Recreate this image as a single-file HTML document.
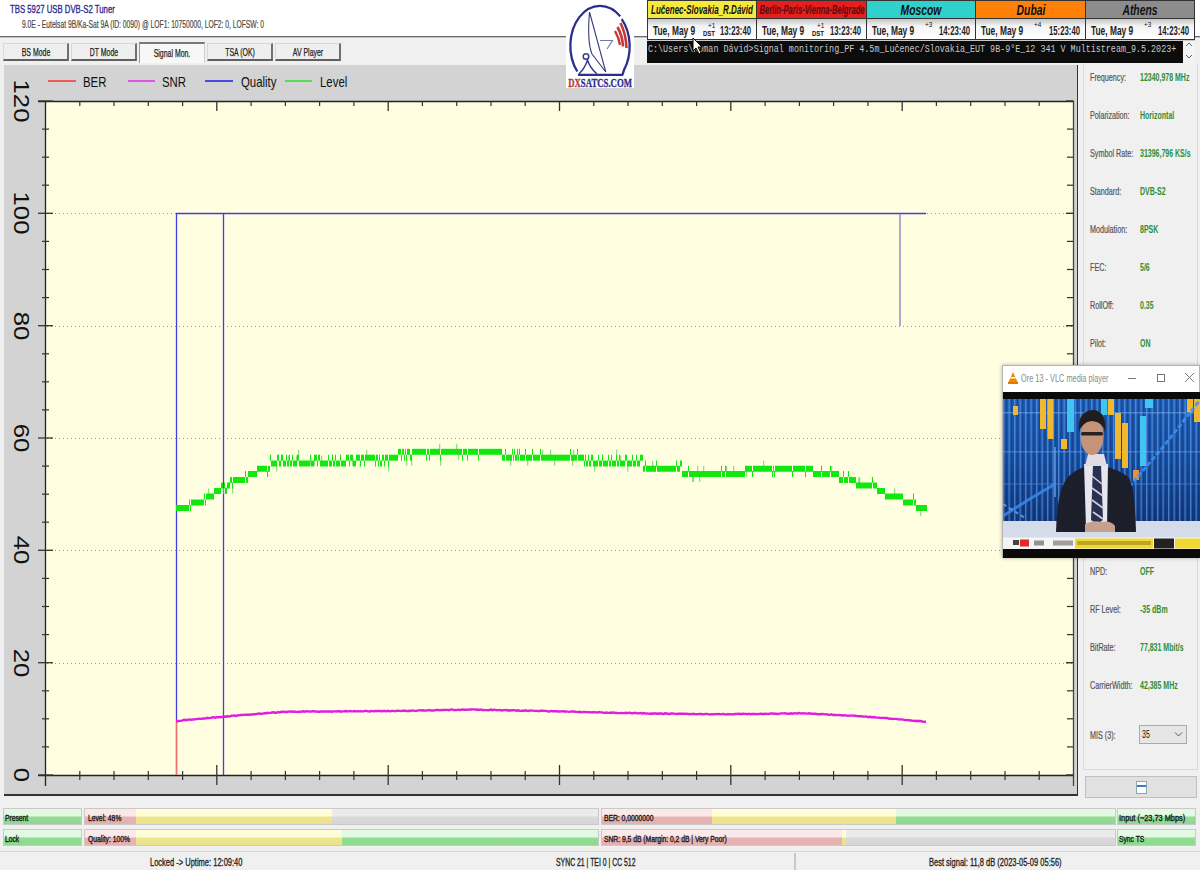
<!DOCTYPE html>
<html><head><meta charset="utf-8">
<style>
*{margin:0;padding:0;box-sizing:border-box}
html,body{width:1200px;height:870px;overflow:hidden;background:#f0f0f0;font-family:"Liberation Sans",sans-serif}
.a{position:absolute}
.t{position:absolute;white-space:nowrap;transform-origin:0 50%;line-height:1}
#top{left:0;top:0;width:1200px;height:36px;background:#fff}
#sep{left:0;top:36px;width:1200px;height:2px;background:linear-gradient(#6a6a6a 0,#6a6a6a 50%,#c4c4c4 50%)}
.tab{position:absolute;top:43px;height:18px;background:#efefef;border-top:1px solid #d8d8d8;border-left:1px solid #d8d8d8;border-bottom:2px solid #606060;border-right:2px solid #707070}
.tab span{position:absolute;left:50%;top:8px;font-size:10.5px;color:#222;-webkit-text-stroke:.25px #222;white-space:nowrap;transform:translate(-50%,-50%) scaleX(.66)}
#panel{left:4px;top:65px;width:1074px;height:731px;background:#d3d3d3;border-right:1px solid #333;border-bottom:2px solid #333}
#plot{left:46px;top:102px;width:1027px;height:673px;background:#fffee1}
.ylab{position:absolute;font-size:22px;color:#111;white-space:nowrap;line-height:1;transform-origin:50% 50%}
.leg{position:absolute;top:80.5px;font-size:15px;color:#111;transform-origin:0 50%;line-height:1}
.rl{position:absolute;left:1090px;font-size:10px;color:#555;-webkit-text-stroke:.2px #555;transform:translateY(-50%) scaleX(.72);transform-origin:0 50%;white-space:nowrap;line-height:1}
.rv{position:absolute;left:1140px;font-size:10px;color:#2c8e38;font-weight:bold;transform:translateY(-50%) scaleX(.70);transform-origin:0 50%;white-space:nowrap;line-height:1}
.ind{position:absolute;width:79px;height:17px;border:1px solid #c9c9c9;background:linear-gradient(#e4f9e4 0,#e4f9e4 48%,#94dc94 52%,#8fd98f 100%)}
.ind span,.bar span{position:absolute;left:3px;top:9.3px;font-size:8.9px;color:#1a1a1a;-webkit-text-stroke:.35px #1a1a1a;transform:translateY(-50%) scaleX(.76);transform-origin:0 50%;white-space:nowrap;line-height:1}
.bar{position:absolute;height:17px;border:1px solid #c9c9c9;background:#e2e2e2;overflow:hidden}
.bar i{position:absolute;top:0;bottom:0;display:block}
.pk{background:linear-gradient(#fbe9e9 0,#fbe9e9 48%,#e7b3b3 52%,#e6b0b0 100%)}
.yl{background:linear-gradient(#fffcd8 0,#fffcd8 48%,#ede590 52%,#ebe38a 100%)}
.gr{background:linear-gradient(#e4f9e4 0,#e4f9e4 48%,#94dc94 52%,#8fd98f 100%)}
.gy{background:linear-gradient(#ebebeb 0,#ebebeb 48%,#d9d9d9 52%,#d6d6d6 100%)}
.st{position:absolute;top:862px;font-size:10.5px;color:#222;-webkit-text-stroke:.3px #222;transform:translateY(-50%) scaleX(.715);transform-origin:0 50%;white-space:nowrap;line-height:1}
.clk{position:absolute;top:0;height:19px;border:1px solid #333;font-style:italic;font-weight:bold;font-size:14px;text-align:center;overflow:hidden}
.clk span{position:absolute;left:50%;top:9px;transform:translate(-50%,-50%) scaleX(.8);white-space:nowrap;line-height:1}
.tim{position:absolute;top:19px;height:21px;background:#fff;border:1px solid #333;border-top:none;overflow:hidden}
.tim span{position:absolute;top:11.5px;font-size:12.5px;font-weight:bold;color:#222;transform:translateY(-50%) scaleX(.62);transform-origin:0 50%;white-space:nowrap;line-height:1}
.tim b{position:absolute;font-weight:normal;font-size:8px;color:#111;transform:scaleX(.8);transform-origin:0 0;line-height:1}
</style></head><body>
<div id="top" class="a"></div>
<div class="t" style="left:10px;top:9.5px;font-size:11.5px;color:#2b2b8e;-webkit-text-stroke:.35px #2b2b8e;transform:translateY(-50%) scaleX(.675)">TBS 5927 USB DVB-S2 Tuner</div>
<div class="t" style="left:22px;top:24.5px;font-size:10px;color:#4a4a4a;-webkit-text-stroke:.2px #4a4a4a;transform:translateY(-50%) scaleX(.672)">9.0E - Eutelsat 9B/Ka-Sat 9A (ID: 0090) @ LOF1: 10750000, LOF2: 0, LOFSW: 0</div>
<div id="sep" class="a"></div>

<div class="tab" style="left:3px;width:66px"><span>BS Mode</span></div>
<div class="tab" style="left:71px;width:66px"><span>DT Mode</span></div>
<div class="tab" style="left:139px;width:66px;top:42px;background:#f7f7f7;border-top:2px solid #777;border-left:1px solid #999;border-bottom:none;border-right:1px solid #ccc;height:21px"><span style="top:9px">Signal Mon.</span></div>
<div class="tab" style="left:207px;width:66px"><span>TSA (OK)</span></div>
<div class="tab" style="left:275px;width:66px"><span>AV Player</span></div>

<div id="panel" class="a"></div>
<div id="plot" class="a"></div>

<!-- legend -->
<svg class="a" style="left:0;top:0" width="1200" height="870">
<line x1="48" y1="81" x2="76" y2="81" stroke="#ee5a5a" stroke-width="2"/>
<line x1="128" y1="81" x2="155" y2="81" stroke="#e055e0" stroke-width="2"/>
<line x1="205" y1="81" x2="233" y2="81" stroke="#4a4ae0" stroke-width="2"/>
<line x1="285" y1="81" x2="312" y2="81" stroke="#55dd55" stroke-width="2"/>
<line x1="47" y1="663.5" x2="1073" y2="663.5" stroke="#9a9a9a" stroke-width="1" stroke-dasharray="1 3"/>
<line x1="47" y1="550.5" x2="1073" y2="550.5" stroke="#9a9a9a" stroke-width="1" stroke-dasharray="1 3"/>
<line x1="47" y1="438.5" x2="1073" y2="438.5" stroke="#9a9a9a" stroke-width="1" stroke-dasharray="1 3"/>
<line x1="47" y1="326.5" x2="1073" y2="326.5" stroke="#9a9a9a" stroke-width="1" stroke-dasharray="1 3"/>
<line x1="47" y1="213.5" x2="1073" y2="213.5" stroke="#9a9a9a" stroke-width="1" stroke-dasharray="1 3"/>
<line x1="45.5" y1="101" x2="45.5" y2="786" stroke="#222" stroke-width="1.3"/>
<line x1="38" y1="101.5" x2="1073.5" y2="101.5" stroke="#222" stroke-width="1.3"/>
<line x1="38" y1="775.5" x2="1073.5" y2="775.5" stroke="#222" stroke-width="1.3"/>
<line x1="1073.5" y1="101" x2="1073.5" y2="786" stroke="#444" stroke-width="1.3"/>
<line x1="38" y1="775.0" x2="53" y2="775.0" stroke="#333" stroke-width="1.3"/>
<line x1="1066" y1="775.0" x2="1073.5" y2="775.0" stroke="#333" stroke-width="1.4"/>
<line x1="42" y1="746.9" x2="49" y2="746.9" stroke="#333" stroke-width="1.2"/>
<line x1="1067" y1="746.9" x2="1073.5" y2="746.9" stroke="#333" stroke-width="1.2"/>
<line x1="42" y1="718.8" x2="49" y2="718.8" stroke="#333" stroke-width="1.2"/>
<line x1="1067" y1="718.8" x2="1073.5" y2="718.8" stroke="#333" stroke-width="1.2"/>
<line x1="42" y1="690.8" x2="49" y2="690.8" stroke="#333" stroke-width="1.2"/>
<line x1="1067" y1="690.8" x2="1073.5" y2="690.8" stroke="#333" stroke-width="1.2"/>
<line x1="38" y1="662.7" x2="53" y2="662.7" stroke="#333" stroke-width="1.3"/>
<line x1="1066" y1="662.7" x2="1073.5" y2="662.7" stroke="#333" stroke-width="1.4"/>
<line x1="42" y1="634.6" x2="49" y2="634.6" stroke="#333" stroke-width="1.2"/>
<line x1="1067" y1="634.6" x2="1073.5" y2="634.6" stroke="#333" stroke-width="1.2"/>
<line x1="42" y1="606.5" x2="49" y2="606.5" stroke="#333" stroke-width="1.2"/>
<line x1="1067" y1="606.5" x2="1073.5" y2="606.5" stroke="#333" stroke-width="1.2"/>
<line x1="42" y1="578.4" x2="49" y2="578.4" stroke="#333" stroke-width="1.2"/>
<line x1="1067" y1="578.4" x2="1073.5" y2="578.4" stroke="#333" stroke-width="1.2"/>
<line x1="38" y1="550.3" x2="53" y2="550.3" stroke="#333" stroke-width="1.3"/>
<line x1="1066" y1="550.3" x2="1073.5" y2="550.3" stroke="#333" stroke-width="1.4"/>
<line x1="42" y1="522.2" x2="49" y2="522.2" stroke="#333" stroke-width="1.2"/>
<line x1="1067" y1="522.2" x2="1073.5" y2="522.2" stroke="#333" stroke-width="1.2"/>
<line x1="42" y1="494.2" x2="49" y2="494.2" stroke="#333" stroke-width="1.2"/>
<line x1="1067" y1="494.2" x2="1073.5" y2="494.2" stroke="#333" stroke-width="1.2"/>
<line x1="42" y1="466.1" x2="49" y2="466.1" stroke="#333" stroke-width="1.2"/>
<line x1="1067" y1="466.1" x2="1073.5" y2="466.1" stroke="#333" stroke-width="1.2"/>
<line x1="38" y1="438.0" x2="53" y2="438.0" stroke="#333" stroke-width="1.3"/>
<line x1="1066" y1="438.0" x2="1073.5" y2="438.0" stroke="#333" stroke-width="1.4"/>
<line x1="42" y1="409.9" x2="49" y2="409.9" stroke="#333" stroke-width="1.2"/>
<line x1="1067" y1="409.9" x2="1073.5" y2="409.9" stroke="#333" stroke-width="1.2"/>
<line x1="42" y1="381.8" x2="49" y2="381.8" stroke="#333" stroke-width="1.2"/>
<line x1="1067" y1="381.8" x2="1073.5" y2="381.8" stroke="#333" stroke-width="1.2"/>
<line x1="42" y1="353.8" x2="49" y2="353.8" stroke="#333" stroke-width="1.2"/>
<line x1="1067" y1="353.8" x2="1073.5" y2="353.8" stroke="#333" stroke-width="1.2"/>
<line x1="38" y1="325.7" x2="53" y2="325.7" stroke="#333" stroke-width="1.3"/>
<line x1="1066" y1="325.7" x2="1073.5" y2="325.7" stroke="#333" stroke-width="1.4"/>
<line x1="42" y1="297.6" x2="49" y2="297.6" stroke="#333" stroke-width="1.2"/>
<line x1="1067" y1="297.6" x2="1073.5" y2="297.6" stroke="#333" stroke-width="1.2"/>
<line x1="42" y1="269.5" x2="49" y2="269.5" stroke="#333" stroke-width="1.2"/>
<line x1="1067" y1="269.5" x2="1073.5" y2="269.5" stroke="#333" stroke-width="1.2"/>
<line x1="42" y1="241.4" x2="49" y2="241.4" stroke="#333" stroke-width="1.2"/>
<line x1="1067" y1="241.4" x2="1073.5" y2="241.4" stroke="#333" stroke-width="1.2"/>
<line x1="38" y1="213.3" x2="53" y2="213.3" stroke="#333" stroke-width="1.3"/>
<line x1="1066" y1="213.3" x2="1073.5" y2="213.3" stroke="#333" stroke-width="1.4"/>
<line x1="42" y1="185.2" x2="49" y2="185.2" stroke="#333" stroke-width="1.2"/>
<line x1="1067" y1="185.2" x2="1073.5" y2="185.2" stroke="#333" stroke-width="1.2"/>
<line x1="42" y1="157.2" x2="49" y2="157.2" stroke="#333" stroke-width="1.2"/>
<line x1="1067" y1="157.2" x2="1073.5" y2="157.2" stroke="#333" stroke-width="1.2"/>
<line x1="42" y1="129.1" x2="49" y2="129.1" stroke="#333" stroke-width="1.2"/>
<line x1="1067" y1="129.1" x2="1073.5" y2="129.1" stroke="#333" stroke-width="1.2"/>
<line x1="38" y1="101.0" x2="53" y2="101.0" stroke="#333" stroke-width="1.3"/>
<line x1="1066" y1="101.0" x2="1073.5" y2="101.0" stroke="#333" stroke-width="1.4"/>
<line x1="79.8" y1="101" x2="79.8" y2="106" stroke="#333" stroke-width="1.2"/>
<line x1="79.8" y1="771" x2="79.8" y2="780" stroke="#333" stroke-width="1.2"/>
<line x1="114.0" y1="101" x2="114.0" y2="106" stroke="#333" stroke-width="1.2"/>
<line x1="114.0" y1="771" x2="114.0" y2="780" stroke="#333" stroke-width="1.2"/>
<line x1="148.3" y1="101" x2="148.3" y2="106" stroke="#333" stroke-width="1.2"/>
<line x1="148.3" y1="771" x2="148.3" y2="780" stroke="#333" stroke-width="1.2"/>
<line x1="182.6" y1="101" x2="182.6" y2="106" stroke="#333" stroke-width="1.2"/>
<line x1="182.6" y1="771" x2="182.6" y2="780" stroke="#333" stroke-width="1.2"/>
<line x1="216.8" y1="101" x2="216.8" y2="111" stroke="#333" stroke-width="1.3"/>
<line x1="216.8" y1="765" x2="216.8" y2="785" stroke="#333" stroke-width="1.3"/>
<line x1="251.1" y1="101" x2="251.1" y2="106" stroke="#333" stroke-width="1.2"/>
<line x1="251.1" y1="771" x2="251.1" y2="780" stroke="#333" stroke-width="1.2"/>
<line x1="285.4" y1="101" x2="285.4" y2="106" stroke="#333" stroke-width="1.2"/>
<line x1="285.4" y1="771" x2="285.4" y2="780" stroke="#333" stroke-width="1.2"/>
<line x1="319.6" y1="101" x2="319.6" y2="106" stroke="#333" stroke-width="1.2"/>
<line x1="319.6" y1="771" x2="319.6" y2="780" stroke="#333" stroke-width="1.2"/>
<line x1="353.9" y1="101" x2="353.9" y2="106" stroke="#333" stroke-width="1.2"/>
<line x1="353.9" y1="771" x2="353.9" y2="780" stroke="#333" stroke-width="1.2"/>
<line x1="388.2" y1="101" x2="388.2" y2="111" stroke="#333" stroke-width="1.3"/>
<line x1="388.2" y1="765" x2="388.2" y2="785" stroke="#333" stroke-width="1.3"/>
<line x1="422.4" y1="101" x2="422.4" y2="106" stroke="#333" stroke-width="1.2"/>
<line x1="422.4" y1="771" x2="422.4" y2="780" stroke="#333" stroke-width="1.2"/>
<line x1="456.7" y1="101" x2="456.7" y2="106" stroke="#333" stroke-width="1.2"/>
<line x1="456.7" y1="771" x2="456.7" y2="780" stroke="#333" stroke-width="1.2"/>
<line x1="491.0" y1="101" x2="491.0" y2="106" stroke="#333" stroke-width="1.2"/>
<line x1="491.0" y1="771" x2="491.0" y2="780" stroke="#333" stroke-width="1.2"/>
<line x1="525.2" y1="101" x2="525.2" y2="106" stroke="#333" stroke-width="1.2"/>
<line x1="525.2" y1="771" x2="525.2" y2="780" stroke="#333" stroke-width="1.2"/>
<line x1="559.5" y1="101" x2="559.5" y2="111" stroke="#333" stroke-width="1.3"/>
<line x1="559.5" y1="765" x2="559.5" y2="785" stroke="#333" stroke-width="1.3"/>
<line x1="593.8" y1="101" x2="593.8" y2="106" stroke="#333" stroke-width="1.2"/>
<line x1="593.8" y1="771" x2="593.8" y2="780" stroke="#333" stroke-width="1.2"/>
<line x1="628.0" y1="101" x2="628.0" y2="106" stroke="#333" stroke-width="1.2"/>
<line x1="628.0" y1="771" x2="628.0" y2="780" stroke="#333" stroke-width="1.2"/>
<line x1="662.3" y1="101" x2="662.3" y2="106" stroke="#333" stroke-width="1.2"/>
<line x1="662.3" y1="771" x2="662.3" y2="780" stroke="#333" stroke-width="1.2"/>
<line x1="696.6" y1="101" x2="696.6" y2="106" stroke="#333" stroke-width="1.2"/>
<line x1="696.6" y1="771" x2="696.6" y2="780" stroke="#333" stroke-width="1.2"/>
<line x1="730.8" y1="101" x2="730.8" y2="111" stroke="#333" stroke-width="1.3"/>
<line x1="730.8" y1="765" x2="730.8" y2="785" stroke="#333" stroke-width="1.3"/>
<line x1="765.1" y1="101" x2="765.1" y2="106" stroke="#333" stroke-width="1.2"/>
<line x1="765.1" y1="771" x2="765.1" y2="780" stroke="#333" stroke-width="1.2"/>
<line x1="799.4" y1="101" x2="799.4" y2="106" stroke="#333" stroke-width="1.2"/>
<line x1="799.4" y1="771" x2="799.4" y2="780" stroke="#333" stroke-width="1.2"/>
<line x1="833.6" y1="101" x2="833.6" y2="106" stroke="#333" stroke-width="1.2"/>
<line x1="833.6" y1="771" x2="833.6" y2="780" stroke="#333" stroke-width="1.2"/>
<line x1="867.9" y1="101" x2="867.9" y2="106" stroke="#333" stroke-width="1.2"/>
<line x1="867.9" y1="771" x2="867.9" y2="780" stroke="#333" stroke-width="1.2"/>
<line x1="902.2" y1="101" x2="902.2" y2="111" stroke="#333" stroke-width="1.3"/>
<line x1="902.2" y1="765" x2="902.2" y2="785" stroke="#333" stroke-width="1.3"/>
<line x1="936.4" y1="101" x2="936.4" y2="106" stroke="#333" stroke-width="1.2"/>
<line x1="936.4" y1="771" x2="936.4" y2="780" stroke="#333" stroke-width="1.2"/>
<line x1="970.7" y1="101" x2="970.7" y2="106" stroke="#333" stroke-width="1.2"/>
<line x1="970.7" y1="771" x2="970.7" y2="780" stroke="#333" stroke-width="1.2"/>
<line x1="1005.0" y1="101" x2="1005.0" y2="106" stroke="#333" stroke-width="1.2"/>
<line x1="1005.0" y1="771" x2="1005.0" y2="780" stroke="#333" stroke-width="1.2"/>
<line x1="1039.2" y1="101" x2="1039.2" y2="106" stroke="#333" stroke-width="1.2"/>
<line x1="1039.2" y1="771" x2="1039.2" y2="780" stroke="#333" stroke-width="1.2"/>
<polyline points="176.5,775 176.5,213.5 223.5,213.5 223.5,775 223.5,213.5 926,213.5" fill="none" stroke="#4040e0" stroke-width="1.3"/>
<line x1="900" y1="214" x2="900" y2="326" stroke="#9090cc" stroke-width="1.5"/>
<line x1="176.5" y1="722" x2="176.5" y2="775" stroke="#f07070" stroke-width="1.3"/>
<polyline points="176.0,721.27 177.5,721.28 179.0,720.95 180.5,720.88 182.0,720.65 183.5,720.00 185.0,719.75 186.5,720.16 188.0,719.62 189.5,719.47 191.0,719.87 192.5,719.37 194.0,719.50 195.5,719.11 197.0,719.10 198.5,718.62 200.0,718.83 201.5,718.86 203.0,718.48 204.5,718.50 206.0,718.32 207.5,717.76 209.0,718.12 210.5,717.87 212.0,717.53 213.5,717.21 215.0,717.66 216.5,717.26 218.0,717.30 219.5,717.28 221.0,717.03 222.5,717.04 224.0,716.54 225.5,716.70 227.0,716.32 228.5,716.53 230.0,716.36 231.5,715.68 233.0,715.58 234.5,715.51 236.0,715.90 237.5,715.40 239.0,715.40 240.5,715.05 242.0,715.06 243.5,714.85 245.0,714.69 246.5,714.73 248.0,714.60 249.5,714.69 251.0,714.41 252.5,714.45 254.0,714.27 255.5,714.24 257.0,713.89 258.5,713.41 260.0,713.79 261.5,713.75 263.0,713.59 264.5,713.25 266.0,713.25 267.5,712.80 269.0,713.13 270.5,712.85 272.0,712.55 273.5,712.29 275.0,712.75 276.5,712.74 278.0,712.01 279.5,712.41 281.0,712.04 282.5,711.77 284.0,711.79 285.5,712.05 287.0,712.06 288.5,711.43 290.0,711.79 291.5,711.36 293.0,711.81 294.5,711.53 296.0,711.91 297.5,711.97 299.0,711.63 300.5,711.96 302.0,711.47 303.5,711.30 305.0,711.66 306.5,711.25 308.0,711.35 309.5,711.49 311.0,711.62 312.5,711.30 314.0,711.21 315.5,711.78 317.0,711.38 318.5,711.82 320.0,711.77 321.5,711.40 323.0,711.44 324.5,711.48 326.0,711.55 327.5,711.51 329.0,711.47 330.5,711.51 332.0,711.72 333.5,711.41 335.0,711.35 336.5,711.54 338.0,711.19 339.5,711.23 341.0,711.69 342.5,711.36 344.0,711.37 345.5,710.99 347.0,711.26 348.5,711.37 350.0,710.96 351.5,711.37 353.0,711.37 354.5,710.97 356.0,711.35 357.5,711.23 359.0,711.37 360.5,711.13 362.0,711.37 363.5,711.39 365.0,710.88 366.5,710.89 368.0,711.32 369.5,711.51 371.0,711.00 372.5,711.13 374.0,711.22 375.5,711.02 377.0,711.04 378.5,711.00 380.0,711.03 381.5,711.18 383.0,710.96 384.5,711.01 386.0,711.27 387.5,710.74 389.0,711.11 390.5,711.22 392.0,710.92 393.5,710.84 395.0,711.24 396.5,710.83 398.0,710.78 399.5,710.93 401.0,711.10 402.5,710.65 404.0,710.78 405.5,710.76 407.0,711.08 408.5,710.77 410.0,711.02 411.5,710.51 413.0,710.59 414.5,710.78 416.0,710.91 417.5,710.57 419.0,710.38 420.5,710.28 422.0,710.53 423.5,710.26 425.0,710.66 426.5,710.64 428.0,710.15 429.5,710.18 431.0,710.52 432.5,710.37 434.0,710.45 435.5,710.10 437.0,709.91 438.5,709.99 440.0,710.31 441.5,709.91 443.0,709.93 444.5,709.95 446.0,709.91 447.5,709.87 449.0,710.20 450.5,709.63 452.0,709.49 453.5,710.11 455.0,710.03 456.5,710.08 458.0,709.66 459.5,709.98 461.0,709.93 462.5,709.41 464.0,709.76 465.5,709.81 467.0,709.68 468.5,709.58 470.0,709.43 471.5,709.48 473.0,709.42 474.5,709.34 476.0,709.73 477.5,709.55 479.0,709.94 480.5,709.44 482.0,710.07 483.5,709.95 485.0,710.14 486.5,710.15 488.0,710.18 489.5,709.98 491.0,709.61 492.5,710.15 494.0,709.78 495.5,709.90 497.0,710.18 498.5,710.11 500.0,710.06 501.5,710.46 503.0,710.26 504.5,710.10 506.0,710.06 507.5,710.52 509.0,710.28 510.5,710.52 512.0,710.25 513.5,710.17 515.0,710.43 516.5,710.66 518.0,710.24 519.5,710.70 521.0,710.83 522.5,710.78 524.0,710.82 525.5,710.29 527.0,710.76 528.5,710.96 530.0,710.42 531.5,710.62 533.0,710.65 534.5,710.87 536.0,710.83 537.5,710.90 539.0,711.15 540.5,710.64 542.0,710.72 543.5,710.80 545.0,710.84 546.5,710.83 548.0,711.50 549.5,711.46 551.0,710.95 552.5,711.28 554.0,711.19 555.5,711.22 557.0,711.28 558.5,711.53 560.0,711.52 561.5,711.40 563.0,711.32 564.5,711.45 566.0,711.34 567.5,711.68 569.0,711.83 570.5,711.63 572.0,711.45 573.5,711.56 575.0,711.73 576.5,711.93 578.0,712.09 579.5,711.84 581.0,712.17 582.5,712.08 584.0,711.99 585.5,711.98 587.0,712.10 588.5,712.28 590.0,712.12 591.5,712.35 593.0,712.22 594.5,712.11 596.0,712.35 597.5,712.49 599.0,712.09 600.5,712.38 602.0,712.41 603.5,712.77 605.0,712.84 606.5,712.48 608.0,712.89 609.5,712.85 611.0,712.51 612.5,712.69 614.0,712.49 615.5,713.01 617.0,712.94 618.5,713.13 620.0,713.10 621.5,713.05 623.0,713.13 624.5,713.05 626.0,712.76 627.5,713.13 629.0,712.76 630.5,712.90 632.0,713.37 633.5,712.89 635.0,712.96 636.5,712.99 638.0,713.56 639.5,713.10 641.0,713.01 642.5,713.60 644.0,713.12 645.5,713.64 647.0,713.54 648.5,713.67 650.0,713.77 651.5,713.53 653.0,713.70 654.5,713.19 656.0,713.72 657.5,713.55 659.0,713.72 660.5,713.31 662.0,713.78 663.5,713.92 665.0,713.33 666.5,713.53 668.0,713.72 669.5,713.92 671.0,713.53 672.5,713.50 674.0,713.57 675.5,713.85 677.0,713.96 678.5,713.73 680.0,713.73 681.5,713.76 683.0,713.75 684.5,713.82 686.0,713.60 687.5,713.91 689.0,714.26 690.5,713.88 692.0,714.14 693.5,713.74 695.0,714.13 696.5,714.20 698.0,714.16 699.5,714.06 701.0,714.06 702.5,714.19 704.0,714.39 705.5,713.88 707.0,713.86 708.5,714.34 710.0,714.47 711.5,714.21 713.0,714.18 714.5,714.39 716.0,714.03 717.5,714.09 719.0,714.05 720.5,714.32 722.0,714.13 723.5,714.06 725.0,714.37 726.5,714.54 728.0,714.06 729.5,714.33 731.0,714.11 732.5,714.40 734.0,714.19 735.5,713.95 737.0,713.90 738.5,713.74 740.0,714.04 741.5,713.96 743.0,713.79 744.5,713.91 746.0,713.86 747.5,714.16 749.0,713.70 750.5,714.28 752.0,713.90 753.5,713.97 755.0,713.86 756.5,714.09 758.0,714.07 759.5,713.86 761.0,713.79 762.5,713.94 764.0,714.02 765.5,713.68 767.0,713.90 768.5,714.04 770.0,713.67 771.5,713.49 773.0,713.48 774.5,713.80 776.0,713.75 777.5,713.93 779.0,713.84 780.5,713.39 782.0,713.34 783.5,713.37 785.0,713.30 786.5,713.64 788.0,713.73 789.5,713.74 791.0,713.27 792.5,713.68 794.0,713.28 795.5,713.34 797.0,713.53 798.5,713.07 800.0,713.08 801.5,713.61 803.0,713.25 804.5,713.33 806.0,713.53 807.5,713.65 809.0,713.24 810.5,713.54 812.0,713.69 813.5,713.79 815.0,713.67 816.5,714.01 818.0,714.34 819.5,714.02 821.0,714.20 822.5,713.97 824.0,714.15 825.5,714.50 827.0,714.18 828.5,714.80 830.0,714.88 831.5,714.39 833.0,715.05 834.5,714.72 836.0,715.07 837.5,715.14 839.0,714.88 840.5,715.22 842.0,715.28 843.5,715.46 845.0,715.15 846.5,715.57 848.0,715.79 849.5,715.66 851.0,715.65 852.5,715.45 854.0,715.81 855.5,715.80 857.0,716.16 858.5,716.24 860.0,716.28 861.5,716.12 863.0,716.56 864.5,716.66 866.0,716.46 867.5,717.07 869.0,717.02 870.5,716.76 872.0,717.44 873.5,717.00 875.0,717.25 876.5,717.63 878.0,717.66 879.5,717.74 881.0,717.92 882.5,717.90 884.0,717.91 885.5,717.94 887.0,717.98 888.5,718.56 890.0,718.71 891.5,718.69 893.0,718.96 894.5,718.83 896.0,718.90 897.5,719.13 899.0,719.61 900.5,719.17 902.0,719.64 903.5,719.60 905.0,720.11 906.5,719.96 908.0,720.09 909.5,720.28 911.0,720.52 912.5,720.82 914.0,720.67 915.5,721.15 917.0,720.78 918.5,721.04 920.0,721.06 921.5,721.19 923.0,721.77 924.5,721.83 926.0,721.53" fill="none" stroke="#e01ee0" stroke-width="2.4"/>
<rect x="176" y="505" width="13" height="6" fill="#10e810"/>
<rect x="189" y="499.5" width="1" height="6" fill="#10e810"/>
<rect x="190" y="505" width="1" height="6" fill="#10e810"/>
<rect x="191" y="499.5" width="13" height="6" fill="#10e810"/>
<rect x="204" y="493.5" width="1" height="6" fill="#10e810"/>
<rect x="205" y="499.5" width="1" height="6" fill="#10e810"/>
<rect x="206" y="493.5" width="8" height="6" fill="#10e810"/>
<rect x="214" y="488" width="7" height="6" fill="#10e810"/>
<rect x="221" y="482.5" width="2" height="6" fill="#10e810"/>
<rect x="223" y="488" width="1" height="6" fill="#10e810"/>
<rect x="224" y="482.5" width="1" height="6" fill="#10e810"/>
<rect x="225" y="488" width="2" height="6" fill="#10e810"/>
<rect x="227" y="482.5" width="3" height="6" fill="#10e810"/>
<rect x="230" y="477" width="2" height="6" fill="#10e810"/>
<rect x="232" y="482.5" width="1" height="6" fill="#10e810"/>
<rect x="233" y="477" width="12" height="6" fill="#10e810"/>
<rect x="245" y="471" width="1" height="6" fill="#10e810"/>
<rect x="246" y="477" width="2" height="6" fill="#10e810"/>
<rect x="248" y="471" width="9" height="6" fill="#10e810"/>
<rect x="257" y="465.75" width="10" height="6" fill="#10e810"/>
<rect x="267" y="471" width="1" height="6" fill="#10e810"/>
<rect x="268" y="465.75" width="2" height="6" fill="#10e810"/>
<rect x="270" y="454.7" width="1" height="6" fill="#10e810"/>
<rect x="271" y="460.5" width="6" height="6" fill="#10e810"/>
<rect x="277" y="454.7" width="2" height="6" fill="#10e810"/>
<rect x="279" y="460.5" width="2" height="6" fill="#10e810"/>
<rect x="281" y="454.7" width="2" height="6" fill="#10e810"/>
<rect x="283" y="460.5" width="3" height="6" fill="#10e810"/>
<rect x="286" y="454.7" width="1" height="6" fill="#10e810"/>
<rect x="287" y="460.5" width="2" height="6" fill="#10e810"/>
<rect x="289" y="454.7" width="1" height="6" fill="#10e810"/>
<rect x="290" y="460.5" width="2" height="6" fill="#10e810"/>
<rect x="292" y="454.7" width="1" height="6" fill="#10e810"/>
<rect x="293" y="460.5" width="4" height="6" fill="#10e810"/>
<rect x="297" y="454.7" width="2" height="6" fill="#10e810"/>
<rect x="299" y="460.5" width="11" height="6" fill="#10e810"/>
<rect x="310" y="454.7" width="1" height="6" fill="#10e810"/>
<rect x="311" y="460.5" width="3" height="6" fill="#10e810"/>
<rect x="314" y="454.7" width="3" height="6" fill="#10e810"/>
<rect x="317" y="460.5" width="1" height="6" fill="#10e810"/>
<rect x="318" y="454.7" width="2" height="6" fill="#10e810"/>
<rect x="320" y="460.5" width="8" height="6" fill="#10e810"/>
<rect x="328" y="454.7" width="1" height="6" fill="#10e810"/>
<rect x="329" y="460.5" width="3" height="6" fill="#10e810"/>
<rect x="332" y="454.7" width="1" height="6" fill="#10e810"/>
<rect x="333" y="460.5" width="2" height="6" fill="#10e810"/>
<rect x="335" y="454.7" width="1" height="6" fill="#10e810"/>
<rect x="336" y="460.5" width="4" height="6" fill="#10e810"/>
<rect x="340" y="454.7" width="1" height="6" fill="#10e810"/>
<rect x="341" y="460.5" width="5" height="6" fill="#10e810"/>
<rect x="346" y="454.7" width="3" height="6" fill="#10e810"/>
<rect x="349" y="460.5" width="1" height="6" fill="#10e810"/>
<rect x="350" y="454.7" width="3" height="6" fill="#10e810"/>
<rect x="353" y="460.5" width="3" height="6" fill="#10e810"/>
<rect x="356" y="454.7" width="4" height="6" fill="#10e810"/>
<rect x="360" y="460.5" width="1" height="6" fill="#10e810"/>
<rect x="361" y="454.7" width="3" height="6" fill="#10e810"/>
<rect x="364" y="460.5" width="1" height="6" fill="#10e810"/>
<rect x="365" y="454.7" width="10" height="6" fill="#10e810"/>
<rect x="375" y="460.5" width="1" height="6" fill="#10e810"/>
<rect x="376" y="454.7" width="2" height="6" fill="#10e810"/>
<rect x="378" y="460.5" width="1" height="6" fill="#10e810"/>
<rect x="379" y="454.7" width="1" height="6" fill="#10e810"/>
<rect x="380" y="460.5" width="2" height="6" fill="#10e810"/>
<rect x="382" y="454.7" width="2" height="6" fill="#10e810"/>
<rect x="384" y="460.5" width="1" height="6" fill="#10e810"/>
<rect x="385" y="454.7" width="3" height="6" fill="#10e810"/>
<rect x="388" y="460.5" width="1" height="6" fill="#10e810"/>
<rect x="389" y="454.7" width="9" height="6" fill="#10e810"/>
<rect x="398" y="448.8" width="3" height="6" fill="#10e810"/>
<rect x="401" y="454.7" width="1" height="6" fill="#10e810"/>
<rect x="402" y="448.8" width="2" height="6" fill="#10e810"/>
<rect x="404" y="454.7" width="1" height="6" fill="#10e810"/>
<rect x="405" y="448.8" width="1" height="6" fill="#10e810"/>
<rect x="406" y="454.7" width="1" height="6" fill="#10e810"/>
<rect x="407" y="448.8" width="3" height="6" fill="#10e810"/>
<rect x="410" y="454.7" width="2" height="6" fill="#10e810"/>
<rect x="412" y="448.8" width="14" height="6" fill="#10e810"/>
<rect x="426" y="454.7" width="1" height="6" fill="#10e810"/>
<rect x="427" y="448.8" width="2" height="6" fill="#10e810"/>
<rect x="429" y="454.7" width="1" height="6" fill="#10e810"/>
<rect x="430" y="448.8" width="10" height="6" fill="#10e810"/>
<rect x="440" y="454.7" width="1" height="6" fill="#10e810"/>
<rect x="441" y="448.8" width="21" height="6" fill="#10e810"/>
<rect x="462" y="454.7" width="1" height="6" fill="#10e810"/>
<rect x="463" y="448.8" width="4" height="6" fill="#10e810"/>
<rect x="467" y="454.7" width="1" height="6" fill="#10e810"/>
<rect x="468" y="448.8" width="10" height="6" fill="#10e810"/>
<rect x="478" y="454.7" width="1" height="6" fill="#10e810"/>
<rect x="479" y="448.8" width="23" height="6" fill="#10e810"/>
<rect x="502" y="454.7" width="3" height="6" fill="#10e810"/>
<rect x="505" y="448.8" width="1" height="6" fill="#10e810"/>
<rect x="506" y="454.7" width="6" height="6" fill="#10e810"/>
<rect x="512" y="448.8" width="1" height="6" fill="#10e810"/>
<rect x="513" y="454.7" width="1" height="6" fill="#10e810"/>
<rect x="514" y="448.8" width="1" height="6" fill="#10e810"/>
<rect x="515" y="454.7" width="2" height="6" fill="#10e810"/>
<rect x="517" y="448.8" width="1" height="6" fill="#10e810"/>
<rect x="518" y="454.7" width="1" height="6" fill="#10e810"/>
<rect x="519" y="448.8" width="1" height="6" fill="#10e810"/>
<rect x="520" y="454.7" width="5" height="6" fill="#10e810"/>
<rect x="525" y="448.8" width="1" height="6" fill="#10e810"/>
<rect x="526" y="454.7" width="6" height="6" fill="#10e810"/>
<rect x="532" y="448.8" width="1" height="6" fill="#10e810"/>
<rect x="533" y="454.7" width="7" height="6" fill="#10e810"/>
<rect x="540" y="448.8" width="1" height="6" fill="#10e810"/>
<rect x="541" y="454.7" width="29" height="6" fill="#10e810"/>
<rect x="570" y="448.8" width="1" height="6" fill="#10e810"/>
<rect x="571" y="454.7" width="6" height="6" fill="#10e810"/>
<rect x="577" y="448.8" width="1" height="6" fill="#10e810"/>
<rect x="578" y="454.7" width="6" height="6" fill="#10e810"/>
<rect x="584" y="460.5" width="1" height="6" fill="#10e810"/>
<rect x="585" y="454.7" width="1" height="6" fill="#10e810"/>
<rect x="586" y="460.5" width="2" height="6" fill="#10e810"/>
<rect x="588" y="454.7" width="1" height="6" fill="#10e810"/>
<rect x="589" y="460.5" width="2" height="6" fill="#10e810"/>
<rect x="591" y="454.7" width="2" height="6" fill="#10e810"/>
<rect x="593" y="460.5" width="5" height="6" fill="#10e810"/>
<rect x="598" y="454.7" width="1" height="6" fill="#10e810"/>
<rect x="599" y="460.5" width="3" height="6" fill="#10e810"/>
<rect x="602" y="454.7" width="1" height="6" fill="#10e810"/>
<rect x="603" y="460.5" width="5" height="6" fill="#10e810"/>
<rect x="608" y="454.7" width="1" height="6" fill="#10e810"/>
<rect x="609" y="460.5" width="2" height="6" fill="#10e810"/>
<rect x="611" y="454.7" width="1" height="6" fill="#10e810"/>
<rect x="612" y="460.5" width="4" height="6" fill="#10e810"/>
<rect x="616" y="454.7" width="1" height="6" fill="#10e810"/>
<rect x="617" y="460.5" width="2" height="6" fill="#10e810"/>
<rect x="619" y="454.7" width="1" height="6" fill="#10e810"/>
<rect x="620" y="460.5" width="5" height="6" fill="#10e810"/>
<rect x="625" y="454.7" width="2" height="6" fill="#10e810"/>
<rect x="627" y="460.5" width="5" height="6" fill="#10e810"/>
<rect x="632" y="454.7" width="1" height="6" fill="#10e810"/>
<rect x="633" y="460.5" width="3" height="6" fill="#10e810"/>
<rect x="636" y="454.7" width="1" height="6" fill="#10e810"/>
<rect x="637" y="460.5" width="3" height="6" fill="#10e810"/>
<rect x="640" y="454.7" width="3" height="6" fill="#10e810"/>
<rect x="643" y="465.75" width="2" height="6" fill="#10e810"/>
<rect x="645" y="460.5" width="1" height="6" fill="#10e810"/>
<rect x="646" y="465.75" width="10" height="6" fill="#10e810"/>
<rect x="656" y="460.5" width="1" height="6" fill="#10e810"/>
<rect x="657" y="465.75" width="19" height="6" fill="#10e810"/>
<rect x="676" y="460.5" width="1" height="6" fill="#10e810"/>
<rect x="677" y="465.75" width="3" height="6" fill="#10e810"/>
<rect x="680" y="460.5" width="2" height="6" fill="#10e810"/>
<rect x="682" y="471" width="6" height="6" fill="#10e810"/>
<rect x="688" y="465.75" width="1" height="6" fill="#10e810"/>
<rect x="689" y="471" width="32" height="6" fill="#10e810"/>
<rect x="721" y="465.75" width="1" height="6" fill="#10e810"/>
<rect x="722" y="471" width="3" height="6" fill="#10e810"/>
<rect x="725" y="465.75" width="1" height="6" fill="#10e810"/>
<rect x="726" y="471" width="19" height="6" fill="#10e810"/>
<rect x="745" y="465.75" width="7" height="6" fill="#10e810"/>
<rect x="752" y="471" width="1" height="6" fill="#10e810"/>
<rect x="753" y="465.75" width="19" height="6" fill="#10e810"/>
<rect x="772" y="471" width="1" height="6" fill="#10e810"/>
<rect x="773" y="465.75" width="1" height="6" fill="#10e810"/>
<rect x="774" y="471" width="1" height="6" fill="#10e810"/>
<rect x="775" y="465.75" width="17" height="6" fill="#10e810"/>
<rect x="792" y="471" width="1" height="6" fill="#10e810"/>
<rect x="793" y="465.75" width="12" height="6" fill="#10e810"/>
<rect x="805" y="471" width="1" height="6" fill="#10e810"/>
<rect x="806" y="465.75" width="7" height="6" fill="#10e810"/>
<rect x="813" y="471" width="8" height="6" fill="#10e810"/>
<rect x="821" y="465.75" width="1" height="6" fill="#10e810"/>
<rect x="822" y="471" width="8" height="6" fill="#10e810"/>
<rect x="830" y="465.75" width="1" height="6" fill="#10e810"/>
<rect x="831" y="471" width="8" height="6" fill="#10e810"/>
<rect x="839" y="477" width="4" height="6" fill="#10e810"/>
<rect x="843" y="471" width="1" height="6" fill="#10e810"/>
<rect x="844" y="477" width="4" height="6" fill="#10e810"/>
<rect x="848" y="471" width="1" height="6" fill="#10e810"/>
<rect x="849" y="477" width="7" height="6" fill="#10e810"/>
<rect x="856" y="482.5" width="16" height="6" fill="#10e810"/>
<rect x="872" y="477" width="1" height="6" fill="#10e810"/>
<rect x="873" y="482.5" width="4" height="6" fill="#10e810"/>
<rect x="877" y="488" width="8" height="6" fill="#10e810"/>
<rect x="885" y="493.5" width="18" height="6" fill="#10e810"/>
<rect x="903" y="499.5" width="10" height="6" fill="#10e810"/>
<rect x="913" y="493.5" width="1" height="6" fill="#10e810"/>
<rect x="914" y="499.5" width="2" height="6" fill="#10e810"/>
<rect x="916" y="505" width="11" height="6" fill="#10e810"/>
<rect x="352.3" y="457.7" width="0.9" height="8" fill="#30d030" opacity=".8"/>
<rect x="652.3" y="460.75" width="0.9" height="8" fill="#30d030" opacity=".8"/>
<rect x="594.3" y="463.5" width="0.9" height="8" fill="#30d030" opacity=".8"/>
<rect x="550.3" y="449.7" width="0.9" height="8" fill="#30d030" opacity=".8"/>
<rect x="232.3" y="485.5" width="0.9" height="8" fill="#30d030" opacity=".8"/>
<rect x="894.3" y="488.5" width="0.9" height="8" fill="#30d030" opacity=".8"/>
<rect x="693.3" y="474" width="0.9" height="8" fill="#30d030" opacity=".8"/>
<rect x="298.3" y="449.7" width="0.9" height="8" fill="#30d030" opacity=".8"/>
<rect x="726.3" y="466" width="0.9" height="8" fill="#30d030" opacity=".8"/>
<rect x="572.3" y="457.7" width="0.9" height="8" fill="#30d030" opacity=".8"/>
<rect x="703.3" y="466" width="0.9" height="8" fill="#30d030" opacity=".8"/>
<rect x="456.3" y="443.8" width="0.9" height="8" fill="#30d030" opacity=".8"/>
<rect x="458.3" y="451.8" width="0.9" height="8" fill="#30d030" opacity=".8"/>
<rect x="411.3" y="457.7" width="0.9" height="8" fill="#30d030" opacity=".8"/>
<rect x="296.3" y="455.5" width="0.9" height="8" fill="#30d030" opacity=".8"/>
<rect x="288.3" y="455.5" width="0.9" height="8" fill="#30d030" opacity=".8"/>
<rect x="620.3" y="455.5" width="0.9" height="8" fill="#30d030" opacity=".8"/>
<rect x="554.3" y="457.7" width="0.9" height="8" fill="#30d030" opacity=".8"/>
<rect x="366.3" y="449.7" width="0.9" height="8" fill="#30d030" opacity=".8"/>
<rect x="699.3" y="474" width="0.9" height="8" fill="#30d030" opacity=".8"/>
<rect x="858.3" y="477.5" width="0.9" height="8" fill="#30d030" opacity=".8"/>
<rect x="440.3" y="457.7" width="0.9" height="8" fill="#30d030" opacity=".8"/>
<rect x="527.3" y="457.7" width="0.9" height="8" fill="#30d030" opacity=".8"/>
<rect x="276.3" y="463.5" width="0.9" height="8" fill="#30d030" opacity=".8"/>
<rect x="314.3" y="457.7" width="0.9" height="8" fill="#30d030" opacity=".8"/>
<rect x="406.3" y="457.7" width="0.9" height="8" fill="#30d030" opacity=".8"/>
<rect x="517.3" y="451.8" width="0.9" height="8" fill="#30d030" opacity=".8"/>
<rect x="510.3" y="457.7" width="0.9" height="8" fill="#30d030" opacity=".8"/>
<rect x="321.3" y="455.5" width="0.9" height="8" fill="#30d030" opacity=".8"/>
<rect x="859.3" y="477.5" width="0.9" height="8" fill="#30d030" opacity=".8"/>
<rect x="697.3" y="466" width="0.9" height="8" fill="#30d030" opacity=".8"/>
<rect x="627.3" y="463.5" width="0.9" height="8" fill="#30d030" opacity=".8"/>
<rect x="692.3" y="474" width="0.9" height="8" fill="#30d030" opacity=".8"/>
<rect x="763.3" y="460.75" width="0.9" height="8" fill="#30d030" opacity=".8"/>
<rect x="616.3" y="449.7" width="0.9" height="8" fill="#30d030" opacity=".8"/>
<rect x="733.3" y="466" width="0.9" height="8" fill="#30d030" opacity=".8"/>
<rect x="573.3" y="449.7" width="0.9" height="8" fill="#30d030" opacity=".8"/>
<rect x="208.3" y="488.5" width="0.9" height="8" fill="#30d030" opacity=".8"/>
<rect x="831.3" y="466" width="0.9" height="8" fill="#30d030" opacity=".8"/>
<rect x="310.3" y="457.7" width="0.9" height="8" fill="#30d030" opacity=".8"/>
<rect x="388.3" y="463.5" width="0.9" height="8" fill="#30d030" opacity=".8"/>
<rect x="920.3" y="508" width="0.9" height="8" fill="#30d030" opacity=".8"/>
<rect x="439.3" y="443.8" width="0.9" height="8" fill="#30d030" opacity=".8"/>
<rect x="746.3" y="468.75" width="0.9" height="8" fill="#30d030" opacity=".8"/>
<rect x="542.3" y="449.7" width="0.9" height="8" fill="#30d030" opacity=".8"/>
</svg>
<div class="leg" style="left:83px;transform:translateY(-50%) scaleX(.76)">BER</div>
<div class="leg" style="left:162px;transform:translateY(-50%) scaleX(.76)">SNR</div>
<div class="leg" style="left:241px;transform:translateY(-50%) scaleX(.76)">Quality</div>
<div class="leg" style="left:320px;transform:translateY(-50%) scaleX(.76)">Level</div>

<!-- y labels -->
<div class="ylab" style="left:21px;top:775.0px;transform:translate(-50%,-50%) rotate(90deg) scaleX(1.17)">0</div>
<div class="ylab" style="left:21px;top:662.7px;transform:translate(-50%,-50%) rotate(90deg) scaleX(1.17)">20</div>
<div class="ylab" style="left:21px;top:550.3px;transform:translate(-50%,-50%) rotate(90deg) scaleX(1.17)">40</div>
<div class="ylab" style="left:21px;top:438.0px;transform:translate(-50%,-50%) rotate(90deg) scaleX(1.17)">60</div>
<div class="ylab" style="left:21px;top:325.7px;transform:translate(-50%,-50%) rotate(90deg) scaleX(1.17)">80</div>
<div class="ylab" style="left:21px;top:213.3px;transform:translate(-50%,-50%) rotate(90deg) scaleX(1.17)">100</div>
<div class="ylab" style="left:21px;top:101.0px;transform:translate(-50%,-50%) rotate(90deg) scaleX(1.17)">120</div>

<!-- right panel -->
<div class="a" style="left:1083px;top:64px;width:1px;height:706px;background:#dadada"></div>
<div class="a" style="left:1083px;top:769px;width:115px;height:1px;background:#dadada"></div>
<div class="a" style="left:1197px;top:64px;width:1px;height:706px;background:#dadada"></div>
<div class="rl" style="top:78px">Frequency:</div><div class="rv" style="top:78px">12340,978 MHz</div>
<div class="rl" style="top:116px">Polarization:</div><div class="rv" style="top:116px">Horizontal</div>
<div class="rl" style="top:154px">Symbol Rate:</div><div class="rv" style="top:154px">31396,796 KS/s</div>
<div class="rl" style="top:192px">Standard:</div><div class="rv" style="top:192px">DVB-S2</div>
<div class="rl" style="top:230px">Modulation:</div><div class="rv" style="top:230px">8PSK</div>
<div class="rl" style="top:268px">FEC:</div><div class="rv" style="top:268px">5/6</div>
<div class="rl" style="top:306px">RollOff:</div><div class="rv" style="top:306px">0.35</div>
<div class="rl" style="top:344px">Pilot:</div><div class="rv" style="top:344px">ON</div>
<div class="rl" style="top:572px">NPD:</div><div class="rv" style="top:572px">OFF</div>
<div class="rl" style="top:610px">RF Level:</div><div class="rv" style="top:610px">-35 dBm</div>
<div class="rl" style="top:648px">BitRate:</div><div class="rv" style="top:648px">77,831 Mbit/s</div>
<div class="rl" style="top:686px">CarrierWidth:</div><div class="rv" style="top:686px">42,385 MHz</div>
<div class="rl" style="top:736px">MIS (3):</div>
<div class="a" style="left:1139px;top:725px;width:48px;height:19px;background:#e6e6e6;border:1px solid #aaa"></div>
<div class="t" style="left:1142px;top:735px;font-size:10px;color:#111;transform:translateY(-50%) scaleX(.7)">35</div>
<svg class="a" style="left:1174px;top:731px" width="9" height="7"><polyline points="1,1.5 4.5,5 8,1.5" fill="none" stroke="#555" stroke-width="1"/></svg>
<div class="a" style="left:1085px;top:776px;width:112px;height:22px;background:#e1e1e1;border:1px solid #c0c0c0"></div>
<div class="a" style="left:1136px;top:781px;width:11px;height:13px;background:#fff;border:1px solid #8aa;"></div>
<div class="a" style="left:1137px;top:785px;width:9px;height:2px;background:#3a7ad0"></div>

<!-- bottom bars -->
<div class="ind" style="left:3px;top:808px"><span style="left:1px">Present</span></div>
<div class="ind" style="left:3px;top:829px"><span style="left:1px">Lock</span></div>
<div class="bar" style="left:84px;top:808px;width:515px"><i class="gy" style="left:0;right:0"></i><i class="pk" style="left:0;width:51px"></i><i class="yl" style="left:51px;width:196px"></i><span>Level: 48%</span></div>
<div class="bar" style="left:84px;top:829px;width:515px"><i class="gr" style="left:0;right:0"></i><i class="pk" style="left:0;width:51px"></i><i class="yl" style="left:51px;width:206px"></i><span>Quality: 100%</span></div>
<div class="bar" style="left:601px;top:808px;width:515px"><i class="gr" style="left:0;right:0"></i><i class="pk" style="left:0;width:110px"></i><i class="yl" style="left:110px;width:184px"></i><span style="left:1.5px">BER: 0,0000000</span></div>
<div class="bar" style="left:601px;top:829px;width:515px"><i class="gy" style="left:0;right:0"></i><i class="pk" style="left:0;width:240px"></i><i class="yl" style="left:240px;width:4px"></i><span style="left:2px">SNR: 9,5 dB (Margin: 0,2 dB | Very Poor)</span></div>
<div class="ind" style="left:1117px;top:808px"><span style="left:1px;transform:translateY(-50%) scaleX(.83)">Input (~23,73 Mbps)</span></div>
<div class="ind" style="left:1117px;top:829px"><span style="left:1px">Sync TS</span></div>
<div class="a" style="left:0;top:851px;width:1200px;height:1px;background:#d6d6d6"></div>
<div class="a" style="left:794px;top:853px;width:2px;height:17px;background:#c8c8c8"></div>
<div class="st" style="left:150px">Locked -&gt; Uptime: 12:09:40</div>
<div class="st" style="left:556px;transform:translateY(-50%) scaleX(.655)">SYNC 21 | TEI 0 | CC 512</div>
<div class="st" style="left:929px">Best signal: 11,8 dB (2023-05-09 05:56)</div>

<!-- logo -->
<div class="a" style="left:566px;top:36px;width:68px;height:52px;background:#fff"></div>
<svg class="a" style="left:560px;top:0" width="80" height="92">
<path d="M17.3,71.5 A29.7,40 0 0 1 60.2,16.4" fill="none" stroke="#2e2e8e" stroke-width="2.3"/>
<path d="M61.7,19.1 A29.7,40 0 0 1 64,69.9 L62.5,75" fill="none" stroke="#2e2e8e" stroke-width="2.3"/>
<line x1="18" y1="74.8" x2="63" y2="74.8" stroke="#2e2e8e" stroke-width="2.2"/>
<path d="M60.5,23 Q66,34 66.5,48" fill="none" stroke="#c83838" stroke-width="2.6"/>
<path d="M57.5,27 Q62.5,36 63,46.5" fill="none" stroke="#c83838" stroke-width="2.6"/>
<path d="M55,31 Q59,38 60,45" fill="none" stroke="#c83838" stroke-width="2.4"/>
<path d="M29.5,12 L45.8,72 M29.5,12 Q27,42 32,54 L45.8,72" fill="none" stroke="#3a3a7a" stroke-width="1.1"/>
<path d="M40,40.5 L52.5,40.5 L47,49" fill="none" stroke="#6a7aaa" stroke-width="1.1"/>
<circle cx="26" cy="56.5" r="2.8" fill="none" stroke="#3a3a8a" stroke-width="1.5"/>
<path d="M19,74 Q25,68 27.5,60 Q30,68 37,74" fill="none" stroke="#3a3a8a" stroke-width="1.5"/>
<text x="8.2" y="86.8" font-family="Liberation Serif" font-weight="bold" font-size="12.8" stroke-width="0.35" textLength="63.8" lengthAdjust="spacingAndGlyphs"><tspan fill="#b03a3a" stroke="#b03a3a">DX</tspan><tspan fill="#2e2e8e" stroke="#2e2e8e">SATCS.COM</tspan></text>
</svg>

<!-- clocks -->
<div class="a" style="left:647px;top:0;width:548px;height:40px;background:#222"></div>
<div class="a" style="left:647px;top:40px;width:548px;height:1px;background:#c8c8c8"></div>
<div class="clk" style="left:647px;width:110px;background:#f5e93e;color:#111"><span style="font-size:12.5px;transform:translate(-50%,-50%) scaleX(.64)">Lučenec-Slovakia_R.Dávid</span></div>
<div class="clk" style="left:756px;width:111px;background:#e61e1e;color:#5a0a0a"><span style="font-size:12.5px;transform:translate(-50%,-50%) scaleX(.61)">Berlin-Paris-Vienna-Belgrade</span></div>
<div class="clk" style="left:866px;width:110px;background:#30d0cc;color:#111"><span style="font-size:14px;transform:translate(-50%,-50%) scaleX(.74)">Moscow</span></div>
<div class="clk" style="left:975px;width:111px;background:#ff8008;color:#111"><span style="font-size:14px;transform:translate(-50%,-50%) scaleX(.74)">Dubai</span></div>
<div class="clk" style="left:1085px;width:110px;background:#8c8c8c;color:#111"><span style="font-size:14px;transform:translate(-50%,-50%) scaleX(.74)">Athens</span></div>
<div class="tim" style="left:647px;width:110px;background:linear-gradient(#c4c4c4 0,#f4f4f4 35%,#fff 100%)"><span style="left:5px;transform:translateY(-50%) scaleX(.67)">Tue, May 9</span><b style="left:60px;top:3px">+1</b><b style="left:55px;top:11px;font-weight:bold;transform:scaleX(.75)">DST</b><span style="left:72px">13:23:40</span></div>
<div class="tim" style="left:756px;width:111px;background:linear-gradient(#c4c4c4 0,#f4f4f4 35%,#fff 100%)"><span style="left:5px;transform:translateY(-50%) scaleX(.67)">Tue, May 9</span><b style="left:60px;top:3px">+1</b><b style="left:55px;top:11px;font-weight:bold;transform:scaleX(.75)">DST</b><span style="left:73px">13:23:40</span></div>
<div class="tim" style="left:866px;width:110px;background:linear-gradient(#c4c4c4 0,#f4f4f4 35%,#fff 100%)"><span style="left:5px;transform:translateY(-50%) scaleX(.67)">Tue, May 9</span><b style="left:58px;top:2px">+3</b><span style="left:72px">14:23:40</span></div>
<div class="tim" style="left:975px;width:111px;background:linear-gradient(#c4c4c4 0,#f4f4f4 35%,#fff 100%)"><span style="left:5px;transform:translateY(-50%) scaleX(.67)">Tue, May 9</span><b style="left:58px;top:2px">+4</b><span style="left:73px">15:23:40</span></div>
<div class="tim" style="left:1085px;width:110px;background:linear-gradient(#c4c4c4 0,#f4f4f4 35%,#fff 100%)"><span style="left:5px;transform:translateY(-50%) scaleX(.67)">Tue, May 9</span><b style="left:58px;top:2px">+3</b><span style="left:72px">14:23:40</span></div>
<!-- cmd -->
<div class="a" style="left:647px;top:41px;width:548px;height:22px;background:#0c0c0c"></div>
<div class="t" style="left:648px;top:49px;font-family:'Liberation Mono',monospace;font-size:11.5px;color:#c8c8c8;transform:translateY(-50%) scaleX(.729)">C:\Users\Roman Dávid&gt;Signal monitoring_PF 4.5m_Lučenec/Slovakia_EUT 9B-9°E_12 341 V Multistream_9.5.2023+</div>
<div class="a" style="left:1183px;top:41px;width:12px;height:22px;background:#f4f4f4"></div>
<svg class="a" style="left:1184px;top:40px" width="10" height="22"><polyline points="2,6 5,3 8,6" fill="none" stroke="#666" stroke-width="1"/><polyline points="2,15 5,18 8,15" fill="none" stroke="#666" stroke-width="1"/></svg>
<!-- mouse cursor -->
<svg class="a" style="left:691.5px;top:37px" width="12" height="18"><path d="M1,1 L1,14 L4,11 L7,17 L9,16 L6,10 L10,10 Z" fill="#fff" stroke="#000" stroke-width="1"/></svg>

<!-- VLC -->
<div class="a" style="left:1002px;top:365px;width:198px;height:193px;background:#fff;border:1px solid #b4b4b4;box-shadow:0 0 4px rgba(0,0,0,.3)"></div>
<svg class="a" style="left:1007px;top:371px" width="12" height="14"><path d="M6,1 L11,12 L1,12 Z" fill="#f08a00"/><rect x="3.5" y="6" width="5" height="1.5" fill="#fff"/><rect x="1" y="11" width="10" height="2" fill="#e07800"/></svg>
<div class="t" style="left:1021px;top:379px;font-size:11.5px;color:#8a8a8a;transform:translateY(-50%) scaleX(.64)">Ore 13 - VLC media player</div>
<div class="a" style="left:1128px;top:378px;width:8px;height:1px;background:#777"></div>
<div class="a" style="left:1157px;top:374px;width:8px;height:8px;border:1px solid #777"></div>
<svg class="a" style="left:1184px;top:372px" width="11" height="11"><path d="M1,1 L10,10 M10,1 L1,10" stroke="#777" stroke-width="1"/></svg>
<svg class="a" style="left:1003px;top:392px" width="197" height="166">
<rect x="0" y="0" width="197" height="166" fill="#0a0a0a"/>
<defs><linearGradient id="vb" x1="0" y1="0" x2="0" y2="1"><stop offset="0" stop-color="#1c5ab4"/><stop offset="0.5" stop-color="#154ca0"/><stop offset="1" stop-color="#0f3478"/></linearGradient>
<pattern id="vs" width="5.5" height="10" patternUnits="userSpaceOnUse"><rect x="0" y="0" width="1.4" height="10" fill="#6aaaf0" opacity=".6"/><rect x="2.8" y="0" width="1" height="10" fill="#0e2e70" opacity=".5"/></pattern></defs>
<rect x="0" y="7" width="197" height="124" fill="url(#vb)"/>
<rect x="0" y="7" width="197" height="122" fill="url(#vs)"/>
<rect x="0" y="20" width="197" height="1.5" fill="#8ab8f0" opacity=".45"/>
<rect x="0" y="59" width="197" height="1.5" fill="#8ab8f0" opacity=".35"/>
<rect x="0" y="91" width="197" height="2" fill="#5a90e0" opacity=".3"/>
<rect x="37" y="7" width="6" height="30" fill="#f0b830"/>
<rect x="44.5" y="7" width="6" height="40" fill="#f0b830"/>
<rect x="10" y="14" width="5" height="9" fill="#f0b830"/>
<rect x="58" y="47" width="6" height="10" fill="#f0b830"/>
<rect x="64" y="7" width="7" height="33" fill="#40c4f4"/>
<rect x="98" y="7" width="6" height="16" fill="#40c4f4"/>
<rect x="105" y="7" width="6" height="16" fill="#f0b830"/>
<rect x="112" y="21" width="6" height="46" fill="#f0b830"/>
<rect x="119" y="31" width="6" height="45" fill="#f0b830"/>
<rect x="137" y="24" width="6" height="50" fill="#40c4f4"/>
<rect x="142" y="7" width="8" height="9" fill="#40c4f4"/>
<rect x="184" y="7" width="6" height="13" fill="#f0b830"/>
<rect x="191" y="7" width="6" height="23" fill="#f0b830"/>
<rect x="130" y="78" width="6" height="10" fill="#e8903a"/>
<rect x="51" y="55" width="2" height="50" fill="#7ab0f0" opacity=".6"/>
<polyline points="0,124 25,108 52,92" fill="none" stroke="#3a8ae8" stroke-width="3" opacity=".85"/>
<polyline points="0,112 22,126" fill="none" stroke="#6aa8f0" stroke-width="2" stroke-dasharray="4 3" opacity=".8"/>
<polyline points="126,95 160,55 197,8" fill="none" stroke="#3a90f0" stroke-width="3" stroke-dasharray="5 2" opacity=".85"/>
<rect x="0" y="129" width="197" height="17" fill="#d4dcea"/>
<path d="M53,140 Q54,96 66,84 Q72,78 84,74 L100,74 Q118,78 126,86 Q132,98 133,140 Z" fill="#1c1e2a"/>
<path d="M81,72 L105,72 L104,136 L83,136 Z" fill="#e6e6ee"/>
<path d="M90,73 L98,73 L100,128 L94,132 L88,128 Z" fill="#2a3050"/>
<path d="M89,84 L99,92 M89,96 L100,104 M89,108 L100,116 M90,120 L100,127" stroke="#d0d0e0" stroke-width="1.6"/>
<path d="M85,62 L101,62 L104,74 L82,74 Z" fill="#e0dce4"/>
<ellipse cx="89" cy="44" rx="11.5" ry="19" fill="#c4937a"/>
<path d="M76,40 Q74,20 89,18 Q104,18 102,40 Q100,30 89,29 Q79,30 76,40 Z" fill="#231c1c"/>
<rect x="78" y="40" width="22" height="3.5" rx="1.5" fill="#2a2020"/>
<path d="M82,132 Q90,128 98,130 Q108,128 112,134 L112,140 L82,140 Z" fill="#c8a090"/>
<rect x="0" y="145.5" width="197" height="11.5" fill="#f4f4f4"/>
<rect x="10" y="148" width="6" height="5" fill="#444"/>
<rect x="17" y="147.5" width="9" height="7" fill="#e02a2a"/>
<rect x="31" y="148.5" width="10" height="5" fill="#666" opacity=".7"/>
<rect x="50" y="148.5" width="20" height="5" fill="#666" opacity=".6"/>
<rect x="72" y="146.5" width="78" height="10" fill="#f0d830"/>
<rect x="74" y="149" width="74" height="4" fill="#7a6a20" opacity=".45"/>
<rect x="151" y="146.5" width="20" height="10" fill="#222"/>
<rect x="172" y="146.5" width="25" height="10" fill="#f0d830"/>
<rect x="0" y="157" width="197" height="9" fill="#0a0a0a"/>
</svg>

</body></html>
